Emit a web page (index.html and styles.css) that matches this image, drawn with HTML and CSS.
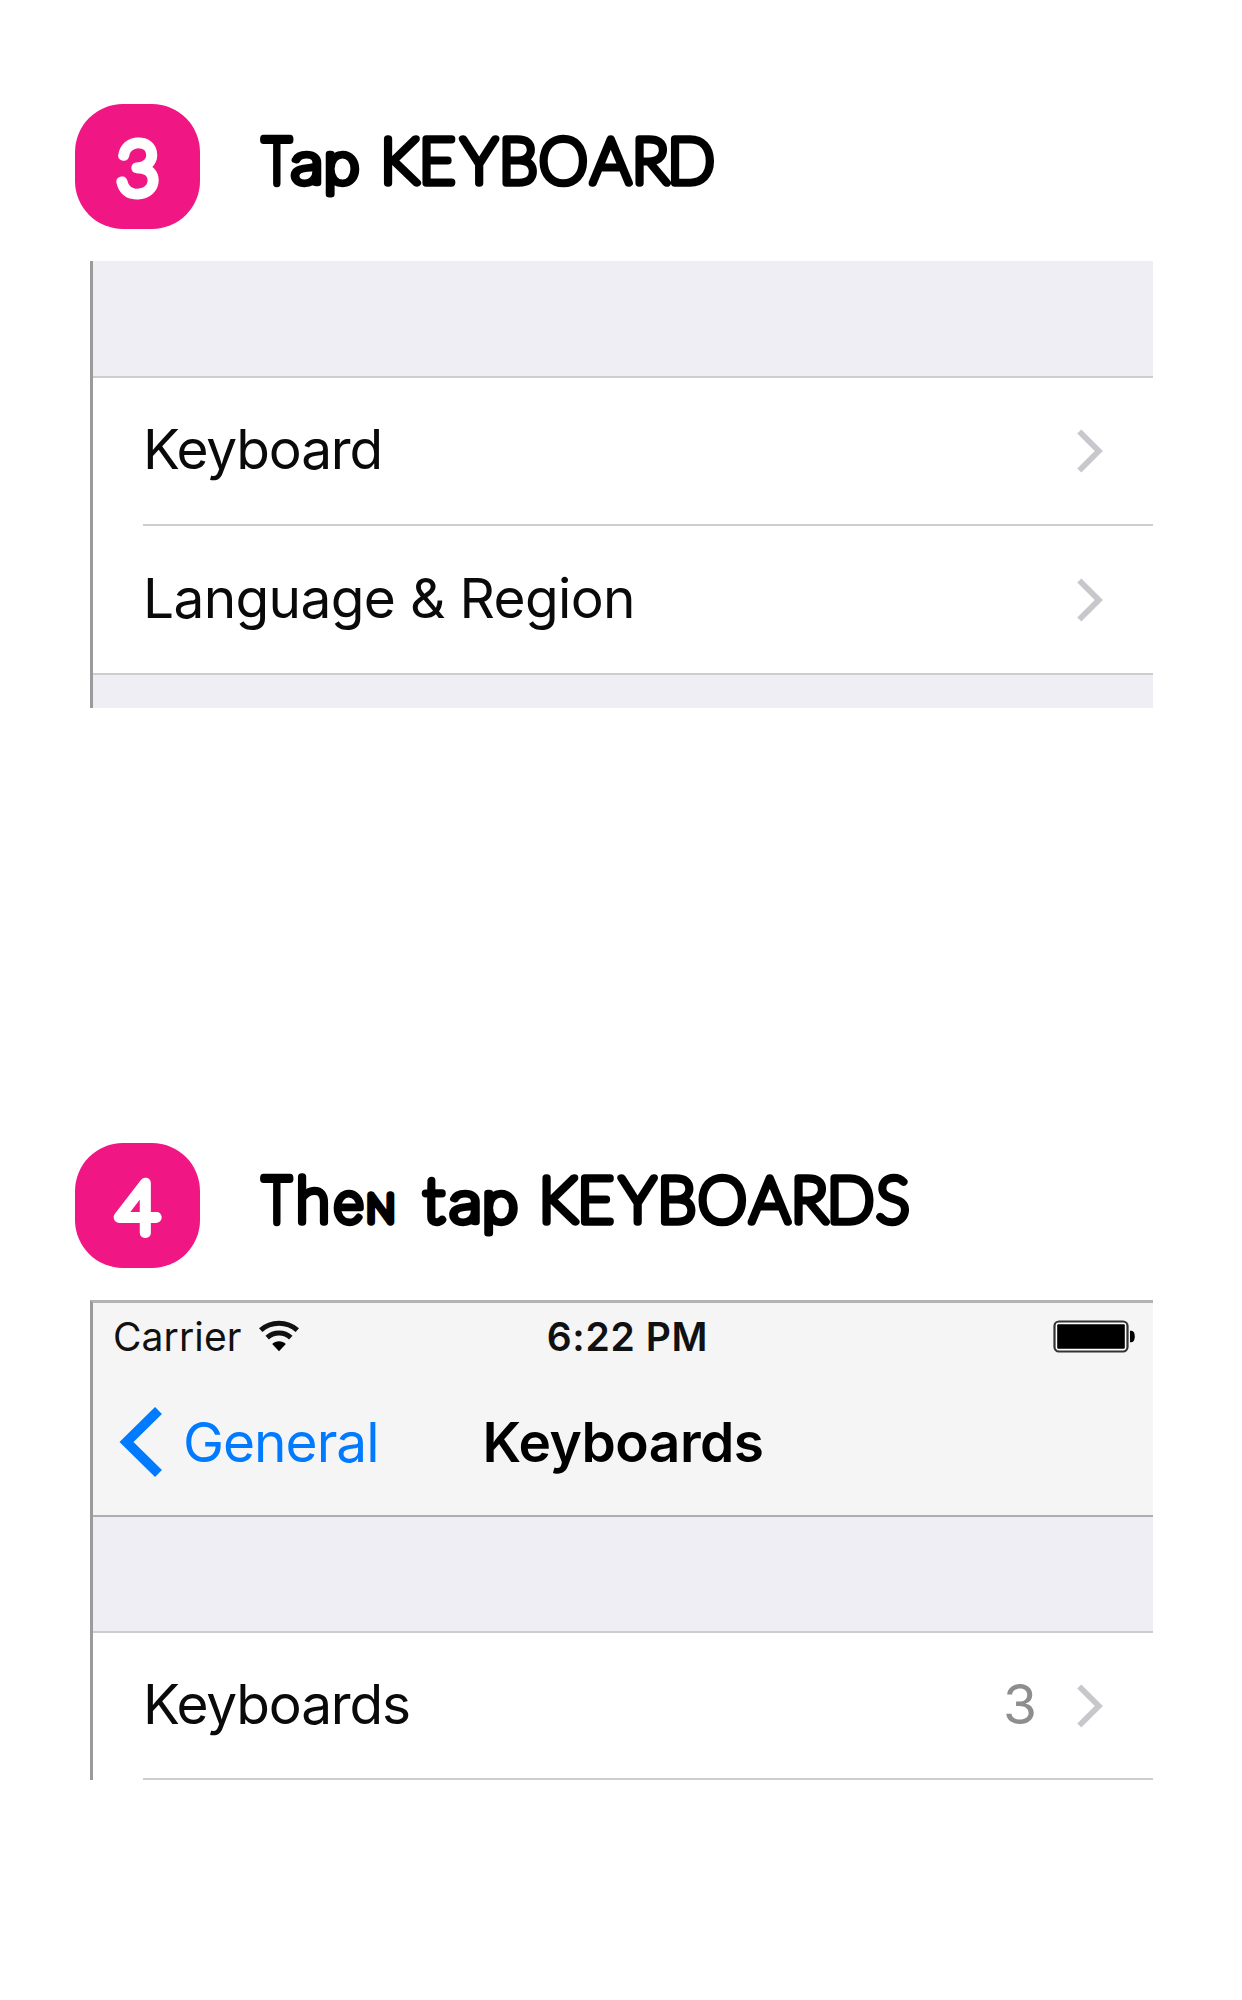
FILE: index.html
```
<!DOCTYPE html>
<html lang="en">
<head>
<meta charset="utf-8">
<title>Keyboard setup</title>
<link rel="stylesheet" href="styles.css">
</head>
<body>
<main class="guide">
  <section class="step step-three">
    <header class="step-header">
      <div class="badge"><svg class="lettering" viewBox="75 104 125 125"><text class="digit" x="137.8" y="194">3</text></svg></div>
      <svg class="lettering title" viewBox="250 104 700 125" role="heading">
        <text class="word" y="183"><tspan class="narrow" x="262.8" textLength="28" lengthAdjust="spacingAndGlyphs">T</tspan><tspan class="low" x="291" textLength="68.5" lengthAdjust="spacingAndGlyphs">ap</tspan></text>
        <text class="word" y="183" x="380.5 419 461.5 499 539 591 632 667.5">KEYBOARD</text>
      </svg>
    </header>
    <div class="panel">
      <div class="gap"></div>
      <div class="row">
        <span class="label">Keyboard</span>
        <svg class="chevron" viewBox="0 0 28 44"><path d="M3.3 2.5 22.8 22 3.3 41.5"/></svg>
      </div>
      <div class="divider"></div>
      <div class="row">
        <span class="label label-long">Language &amp; Region</span>
        <svg class="chevron" viewBox="0 0 28 44"><path d="M3.3 2.5 22.8 22 3.3 41.5"/></svg>
      </div>
      <div class="gap gap-end"></div>
    </div>
  </section>

  <section class="step step-four">
    <header class="step-header">
      <div class="badge"><svg class="lettering" viewBox="75 104 125 125"><text class="digit" x="137.8" y="194">4</text></svg></div>
      <svg class="lettering title" viewBox="250 104 700 125" role="heading">
        <text class="word" y="183"><tspan class="narrow" x="262.8" textLength="28" lengthAdjust="spacingAndGlyphs">T</tspan><tspan x="296">h</tspan><tspan class="low" x="333.5">e</tspan><tspan class="small" x="366.5">n</tspan></text>
        <text class="word" y="183" x="423.5">t<tspan class="low" x="449.5" textLength="68.5" lengthAdjust="spacingAndGlyphs">ap</tspan></text>
        <text class="word" y="183" x="539 577.4 620 657.5 698 750 791 827 876.5">KEYBOARDS</text>
      </svg>
    </header>
    <div class="panel panel-top">
      <div class="bars">
        <div class="status">
          <span class="carrier">Carrier
            <svg class="wifi" viewBox="0 0 42 32">
              <path class="arc" d="M2.7 10.2C13 .9 29 .9 39.3 10.2M9.2 17.6c6.5-6.2 17.1-6.2 23.6 0"/>
              <path d="M21 31.2l-6.8-7.2c3.7-3.7 9.9-3.7 13.6 0z"/>
            </svg>
          </span>
          <span class="time">6:22 PM</span>
          <svg class="battery" viewBox="0 0 84 34">
            <rect class="shell" x="1.5" y="1.5" width="73" height="30" rx="4.5"/>
            <rect x="4.2" y="4.2" width="67.6" height="24.6" rx="1"/>
            <path d="M77 10.8h1.5c2 0 3.3 2.2 3.3 5.7s-1.3 5.7-3.3 5.7H77z"/>
          </svg>
        </div>
        <div class="nav">
          <span class="back"><svg class="back-arrow" viewBox="0 0 44 72"><path d="M39.5 4.5 7.5 36l32 31.5"/></svg>General</span>
          <span class="nav-title">Keyboards</span>
          <span></span>
        </div>
      </div>
      <div class="gap"></div>
      <div class="row">
        <span class="label">Keyboards</span>
        <span class="value">3</span>
        <svg class="chevron" viewBox="0 0 28 44"><path d="M3.3 2.5 22.8 22 3.3 41.5"/></svg>
      </div>
      <div class="divider"></div>
    </div>
  </section>
</main>
</body>
</html>
```
FILE: styles.css
```
* { box-sizing: border-box; }
body { margin: 0; background: #fff; color: #000; font-family: Inter, "Liberation Sans", sans-serif; }
svg { display: block; flex: none; }

.guide { width: 1242px; height: 2000px; padding-top: 104px; overflow: hidden; }
.step { height: 1039px; }
.step-header { display: flex; gap: 50px; height: 125px; padding-left: 75px; margin-bottom: 32px; }
.badge { width: 125px; height: 125px; border-radius: 48px; background: #f01684; }
.badge svg { width: 125px; height: 125px; }
.title { width: 700px; height: 125px; }

/* hairline font thickened with a round-joined outline */
.lettering { font-family: Lato, sans-serif; font-weight: 100; font-variant-ligatures: none; overflow: visible; }
.lettering text { stroke-linejoin: round; stroke-linecap: round; }
.word { font-size: 62px; stroke: #000; stroke-width: 7.5px; }
.narrow { stroke-width: 8.6px; }
.low { font-family: Inter, sans-serif; font-size: 53px; stroke-width: 6.4px; }
.small { font-size: 54px; font-variant: small-caps; }
.digit { font-size: 73px; fill: #fff; stroke: #fff; stroke-width: 10.2px; text-anchor: middle; }

.panel { width: 1063px; margin-left: 90px; border-left: 3px solid #9b9b9b; }
.panel-top { border-top: 3px solid #b3b3b3; }
.gap { height: 117px; background: #efeef4; border-bottom: 2px solid #cdccd1; }
.panel-top .gap { height: 116px; }
.gap-end { height: 35px; border-top: 2px solid #cdccd1; border-bottom: 0; }
.row { display: flex; align-items: center; height: 146px; padding: 0 49px 0 50px; }
.step-three .row + .divider + .row { height: 147px; }
.panel-top .row { height: 145px; }
.divider { height: 2px; margin-left: 50px; background: #cdccd1; }
.label { padding-bottom: 4px; font-size: 55px; line-height: 66px; letter-spacing: -1.2px; color: #0a0a0a; white-space: nowrap; }
.label-long { letter-spacing: -0.65px; }
.value { padding-bottom: 4px; margin-left: auto; margin-right: 39px; font-size: 55px; line-height: 66px; color: #8e8e8e; }
.chevron { width: 28px; height: 44px; margin-left: auto; }
.value + .chevron { margin-left: 0; }
.chevron path { fill: none; stroke: #c7c7cc; stroke-width: 5.8; }

.bars { height: 214px; background: #f5f5f6; border-bottom: 2px solid #aeaeb1; }
.status, .nav { display: grid; grid-template-columns: 1fr auto 1fr; align-items: center; }
.status { height: 68px; padding: 0 16px 0 20px; }
.carrier { display: flex; align-items: center; gap: 16px; font-size: 39px; line-height: 48px; letter-spacing: .1px; color: #111; }
.wifi { width: 42px; height: 32px; margin-top: -2px; }
.arc { fill: none; stroke: #111; stroke-width: 5; }
.time { margin-left: 5px; font-size: 39px; line-height: 48px; font-weight: 600; letter-spacing: .65px; color: #111; }
.battery { width: 84px; height: 34px; justify-self: end; }
.shell { fill: #fff; stroke: #333; stroke-width: 2.2; }
.nav { height: 142px; padding: 0 26px 0 26px; }
.back { display: flex; align-items: center; gap: 20px; font-size: 55px; line-height: 66px; letter-spacing: -1px; color: #007aff; }
.back-arrow { width: 44px; height: 72px; }
.back-arrow path { fill: none; stroke: #007aff; stroke-width: 9.8; }
.nav-title { font-size: 55px; line-height: 66px; font-weight: 600; letter-spacing: -.5px; }
```
